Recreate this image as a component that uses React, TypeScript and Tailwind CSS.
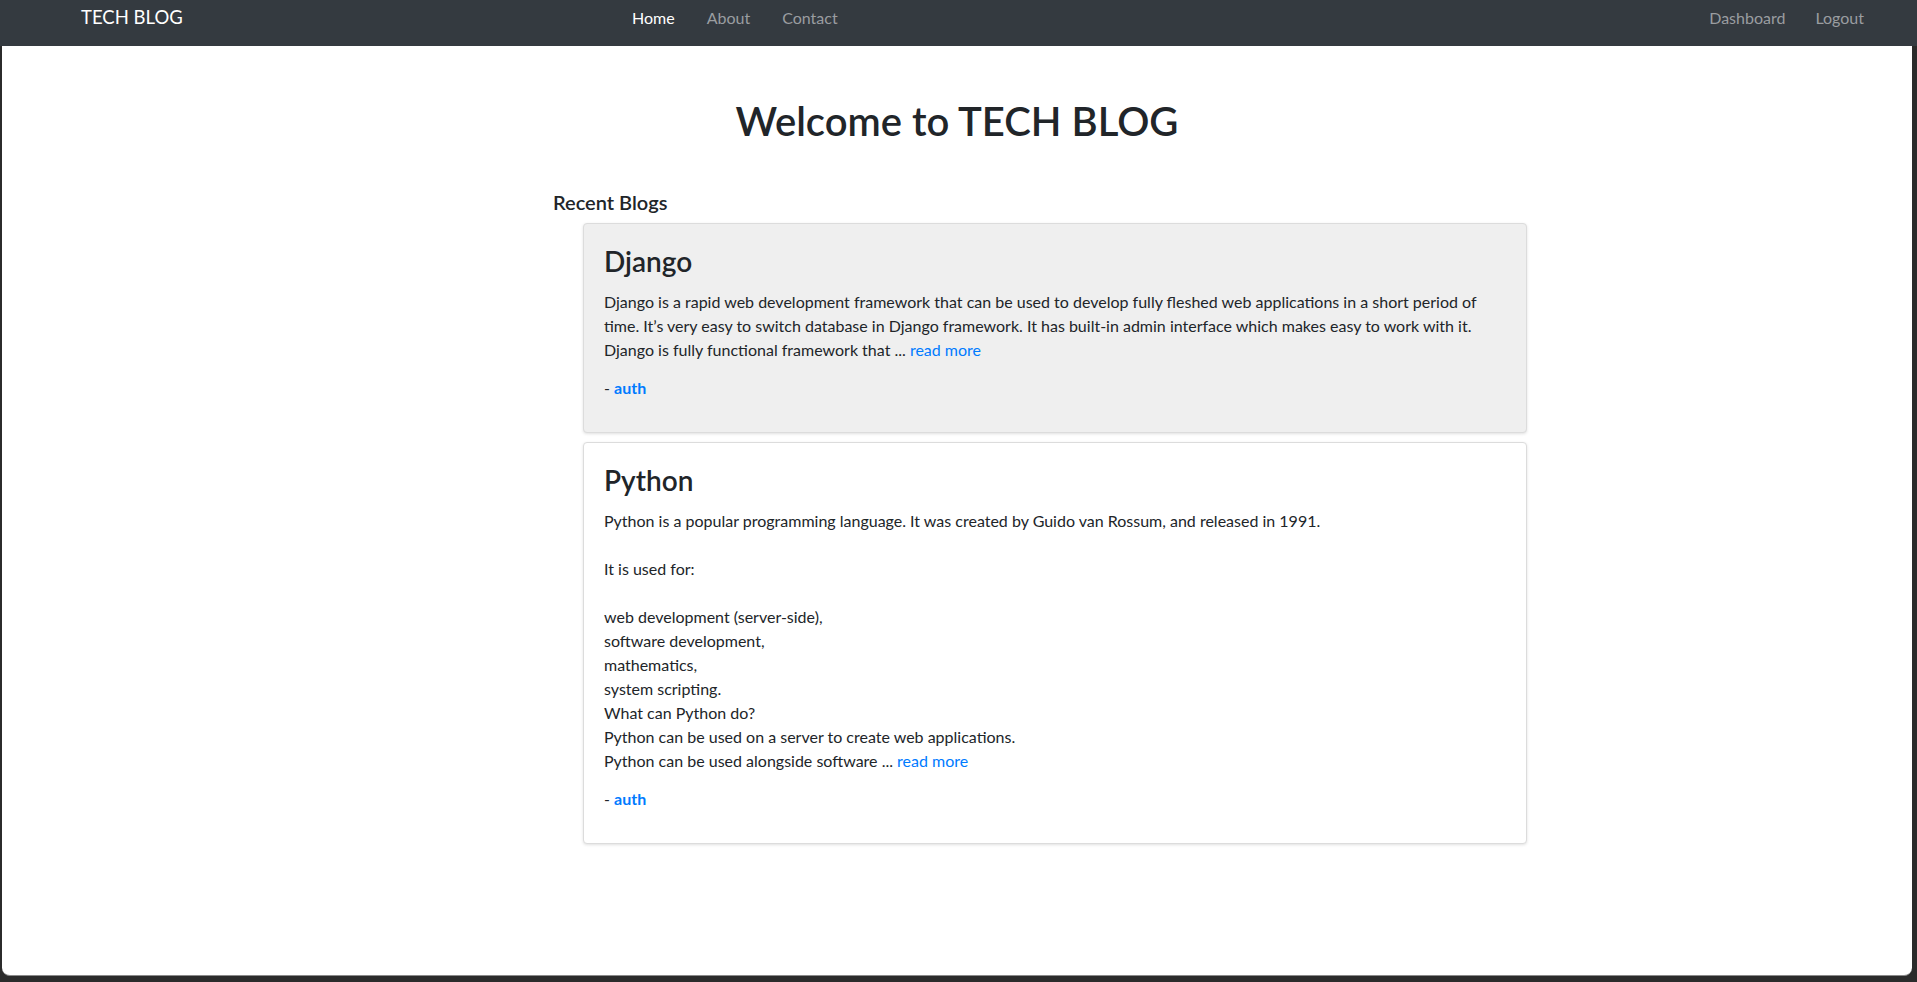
import React from "react";

const font = { fontFamily: "Lato, 'Liberation Sans', sans-serif" };

function Card({
  title,
  children,
  bg,
}: {
  title: string;
  children: React.ReactNode;
  bg: string;
}) {
  return (
    <div
      className={`${bg} border border-[#dcdcdc] rounded-[4px] shadow-[0_1px_3px_rgba(0,0,0,0.12)] px-5 pt-5 pb-[20px]`}
    >
      <h3 className="text-[28px] leading-[34px] font-semibold text-[#212529] mb-3">{title}</h3>
      <div className="text-[16px] leading-[24px] text-[#212529]">{children}</div>
      <p className="text-[16px] leading-[24px] text-[#212529] mt-[14px] mb-[12px]">
        - <a className="font-bold text-[#007bff]">auth</a>
      </p>
    </div>
  );
}

export default function App() {
  return (
    <div className="w-[1917px] h-[982px] bg-[#2b2b2b] flex flex-col overflow-hidden" style={font}>
      <nav className="h-[46px] bg-[#343a40] flex items-start shrink-0">
        <div className="flex items-center h-[36px] w-full pl-[81px] pr-[53px]">
          <span className="text-[18.5px] text-white w-[551px]">TECH BLOG</span>
          <div className="flex gap-[32px] text-[16px]">
            <span className="text-white">Home</span>
            <span className="text-[#9a9da0]">About</span>
            <span className="text-[#9a9da0]">Contact</span>
          </div>
          <div className="ml-auto flex gap-[30px] text-[16px]">
            <span className="text-[#9a9da0]">Dashboard</span>
            <span className="text-[#9a9da0]">Logout</span>
          </div>
        </div>
      </nav>
      <div className="ml-[2px] mr-[5px] h-[930px] bg-white rounded-b-[8px] border-b border-[#8a8a8a]">
        <h1 className="text-center text-[40px] leading-[48px] font-semibold text-[#212529] pt-[51px]">
          Welcome to TECH BLOG
        </h1>
        <div className="ml-[551px] mt-[45px]">
          <h5 className="text-[20px] leading-[24px] font-semibold text-[#212529] mb-[9px]">Recent Blogs</h5>
          <div className="ml-[30px] w-[944px] flex flex-col gap-[9px]">
            <Card title="Django" bg="bg-[#efefef]">
              <p>
                Django is a rapid web development framework that can be used to develop fully fleshed web
                applications in a short period of time. It’s very easy to switch database in Django framework.
                It has built-in admin interface which makes easy to work with it. Django is fully functional
                framework that ... <a className="text-[#007bff]">read more</a>
              </p>
            </Card>
            <Card title="Python" bg="bg-white">
              <p>Python is a popular programming language. It was created by Guido van Rossum, and released in 1991.</p>
              <p className="h-[24px]"></p>
              <p>It is used for:</p>
              <p className="h-[24px]"></p>
              <p>web development (server-side),</p>
              <p>software development,</p>
              <p>mathematics,</p>
              <p>system scripting.</p>
              <p>What can Python do?</p>
              <p>Python can be used on a server to create web applications.</p>
              <p>
                Python can be used alongside software ... <a className="text-[#007bff]">read more</a>
              </p>
            </Card>
          </div>
        </div>
      </div>
    </div>
  );
}
